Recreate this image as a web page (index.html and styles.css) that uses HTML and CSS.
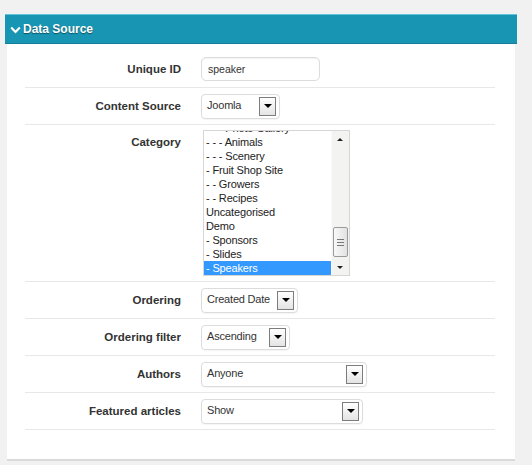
FILE: index.html
```html
<!DOCTYPE html>
<html>
<head>
<meta charset="utf-8">
<link rel="stylesheet" href="styles.css">
</head>
<body>
<div class="panel">
  <div class="panel-head">
    <svg class="chev" width="11" height="8" viewBox="0 0 11 8"><polyline points="1.2,1.5 5.5,6 9.8,1.5" fill="none" stroke="#fff" stroke-width="2.2"/></svg>
    <span>Data Source</span>
  </div>
  <div class="panel-body">
    <div class="row">
      <label class="lbl">Unique ID</label>
      <div class="ctl"><div class="input">speaker</div></div>
    </div>
    <div class="row">
      <label class="lbl">Content Source</label>
      <div class="ctl"><div class="select w-cs"><span>Joomla</span><span class="btn"><i></i></span></div></div>
    </div>
    <div class="row row-cat">
      <label class="lbl lbl-top">Category</label>
      <div class="ctl">
        <div class="listbox">
          <div class="items">
            <div class="item">- - - Photo Gallery</div>
            <div class="item">- - - Animals</div>
            <div class="item">- - - Scenery</div>
            <div class="item">- Fruit Shop Site</div>
            <div class="item">- - Growers</div>
            <div class="item">- - Recipes</div>
            <div class="item">Uncategorised</div>
            <div class="item">Demo</div>
            <div class="item">- Sponsors</div>
            <div class="item">- Slides</div>
            <div class="item sel">- Speakers</div>
          </div>
          <div class="sbar">
            <span class="arr up"></span>
            <span class="thumb"><i></i><i></i><i></i></span>
            <span class="arr down"></span>
          </div>
        </div>
      </div>
    </div>
    <div class="row">
      <label class="lbl">Ordering</label>
      <div class="ctl"><div class="select w-ord"><span>Created Date</span><span class="btn"><i></i></span></div></div>
    </div>
    <div class="row">
      <label class="lbl">Ordering filter</label>
      <div class="ctl"><div class="select w-of"><span>Ascending</span><span class="btn"><i></i></span></div></div>
    </div>
    <div class="row">
      <label class="lbl">Authors</label>
      <div class="ctl"><div class="select w-au"><span>Anyone</span><span class="btn"><i></i></span></div></div>
    </div>
    <div class="row">
      <label class="lbl">Featured articles</label>
      <div class="ctl"><div class="select w-fa"><span>Show</span><span class="btn"><i></i></span></div></div>
    </div>
  </div>
</div>
</body>
</html>
```

FILE: styles.css
```css
html, body {
  margin: 0;
  padding: 0;
}
body {
  background: #f1f1f1;
  font-family: "Liberation Sans", Arial, sans-serif;
  width: 532px;
  height: 465px;
  overflow: hidden;
}
.panel {
  margin: 14px 15px 0 5px;
}
.panel-head {
  height: 28px;
  background: #1795b3;
  border-top: 1px solid #62c2d8;
  border-bottom: 1px solid #137e98;
  color: #fff;
  font-weight: bold;
  font-size: 12px;
  display: flex;
  align-items: center;
  padding-left: 5px;
  gap: 2px;
  text-shadow: 0 1px 1px rgba(0,0,0,0.45);
}
.chev {
  margin-top: 1px;
}
.panel-body {
  margin: 0 2px;
  background: #fff;
  padding: 7px 20px 29px 18px;
  border-bottom: 2px solid #dadada;
}
.row {
  display: grid;
  grid-template-columns: 156px 1fr;
  column-gap: 20px;
  align-items: center;
  height: 36px;
  border-bottom: 1px solid #e8e8e8;
}
.row-cat {
  height: 156px;
  align-items: start;
}
.lbl {
  text-align: right;
  font-weight: bold;
  font-size: 11.5px;
  color: #333;
}
.lbl-top {
  padding-top: 11px;
}
.ctl {
  display: flex;
}
.input {
  width: 111px;
  height: 22px;
  border: 1px solid #dcdcdc;
  border-radius: 5px;
  box-shadow: inset 0 1px 1px rgba(0,0,0,0.05);
  padding-left: 6px;
  font-size: 10.5px;
  color: #333;
  display: flex;
  align-items: center;
}
.select {
  box-sizing: border-box;
  height: 25px;
  border: 1px solid #dcdcdc;
  border-radius: 4px;
  box-shadow: 0 1px 1px rgba(0,0,0,0.04);
  display: flex;
  align-items: center;
  justify-content: space-between;
  padding: 0 3px 0 5px;
  font-size: 11px;
  color: #333;
  letter-spacing: -0.2px;
}
.select > span:first-child {
  margin-top: -3px;
}
.w-cs { width: 79px; }
.w-ord { width: 97px; }
.w-of { width: 89px; }
.w-au { width: 166px; }
.w-fa { width: 162px; }
.btn {
  box-sizing: border-box;
  width: 17px;
  height: 19px;
  border: 1px solid #7d7d7d;
  background: linear-gradient(#ffffff, #e4e4e4);
  display: flex;
  align-items: center;
  justify-content: center;
}
.btn i {
  width: 0;
  height: 0;
  border-left: 4px solid transparent;
  border-right: 4px solid transparent;
  border-top: 4px solid #000;
}
.listbox {
  margin: 5px 0 0 2px;
  width: 145px;
  height: 144px;
  border: 1px solid #d6d6d6;
  display: flex;
  overflow: hidden;
}
.items {
  width: 128px;
  margin-top: -10px;
  font-size: 11px;
  color: #222;
  letter-spacing: -0.15px;
}
.item {
  height: 14px;
  line-height: 14px;
  padding-left: 2px;
  white-space: nowrap;
}
.item.sel {
  background: #3399ff;
  color: #fff;
}
.sbar {
  width: 17px;
  background: #f3f3f1;
  border-left: 1px solid #fafafa;
  position: relative;
}
.arr {
  position: absolute;
  left: 5px;
  width: 0;
  height: 0;
  border-left: 3px solid transparent;
  border-right: 3px solid transparent;
}
.arr.up {
  top: 7px;
  border-bottom: 3px solid #222;
}
.arr.down {
  bottom: 6px;
  border-top: 3px solid #222;
}
.thumb {
  position: absolute;
  left: 1px;
  top: 96px;
  box-sizing: border-box;
  width: 15px;
  height: 30px;
  border: 1px solid #9a9a9a;
  border-radius: 2px;
  background: linear-gradient(90deg, #f8f8f8, #e2e2e2);
  display: flex;
  flex-direction: column;
  align-items: center;
  justify-content: center;
  gap: 2px;
}
.thumb i {
  width: 7px;
  height: 1px;
  background: #777;
}
```
